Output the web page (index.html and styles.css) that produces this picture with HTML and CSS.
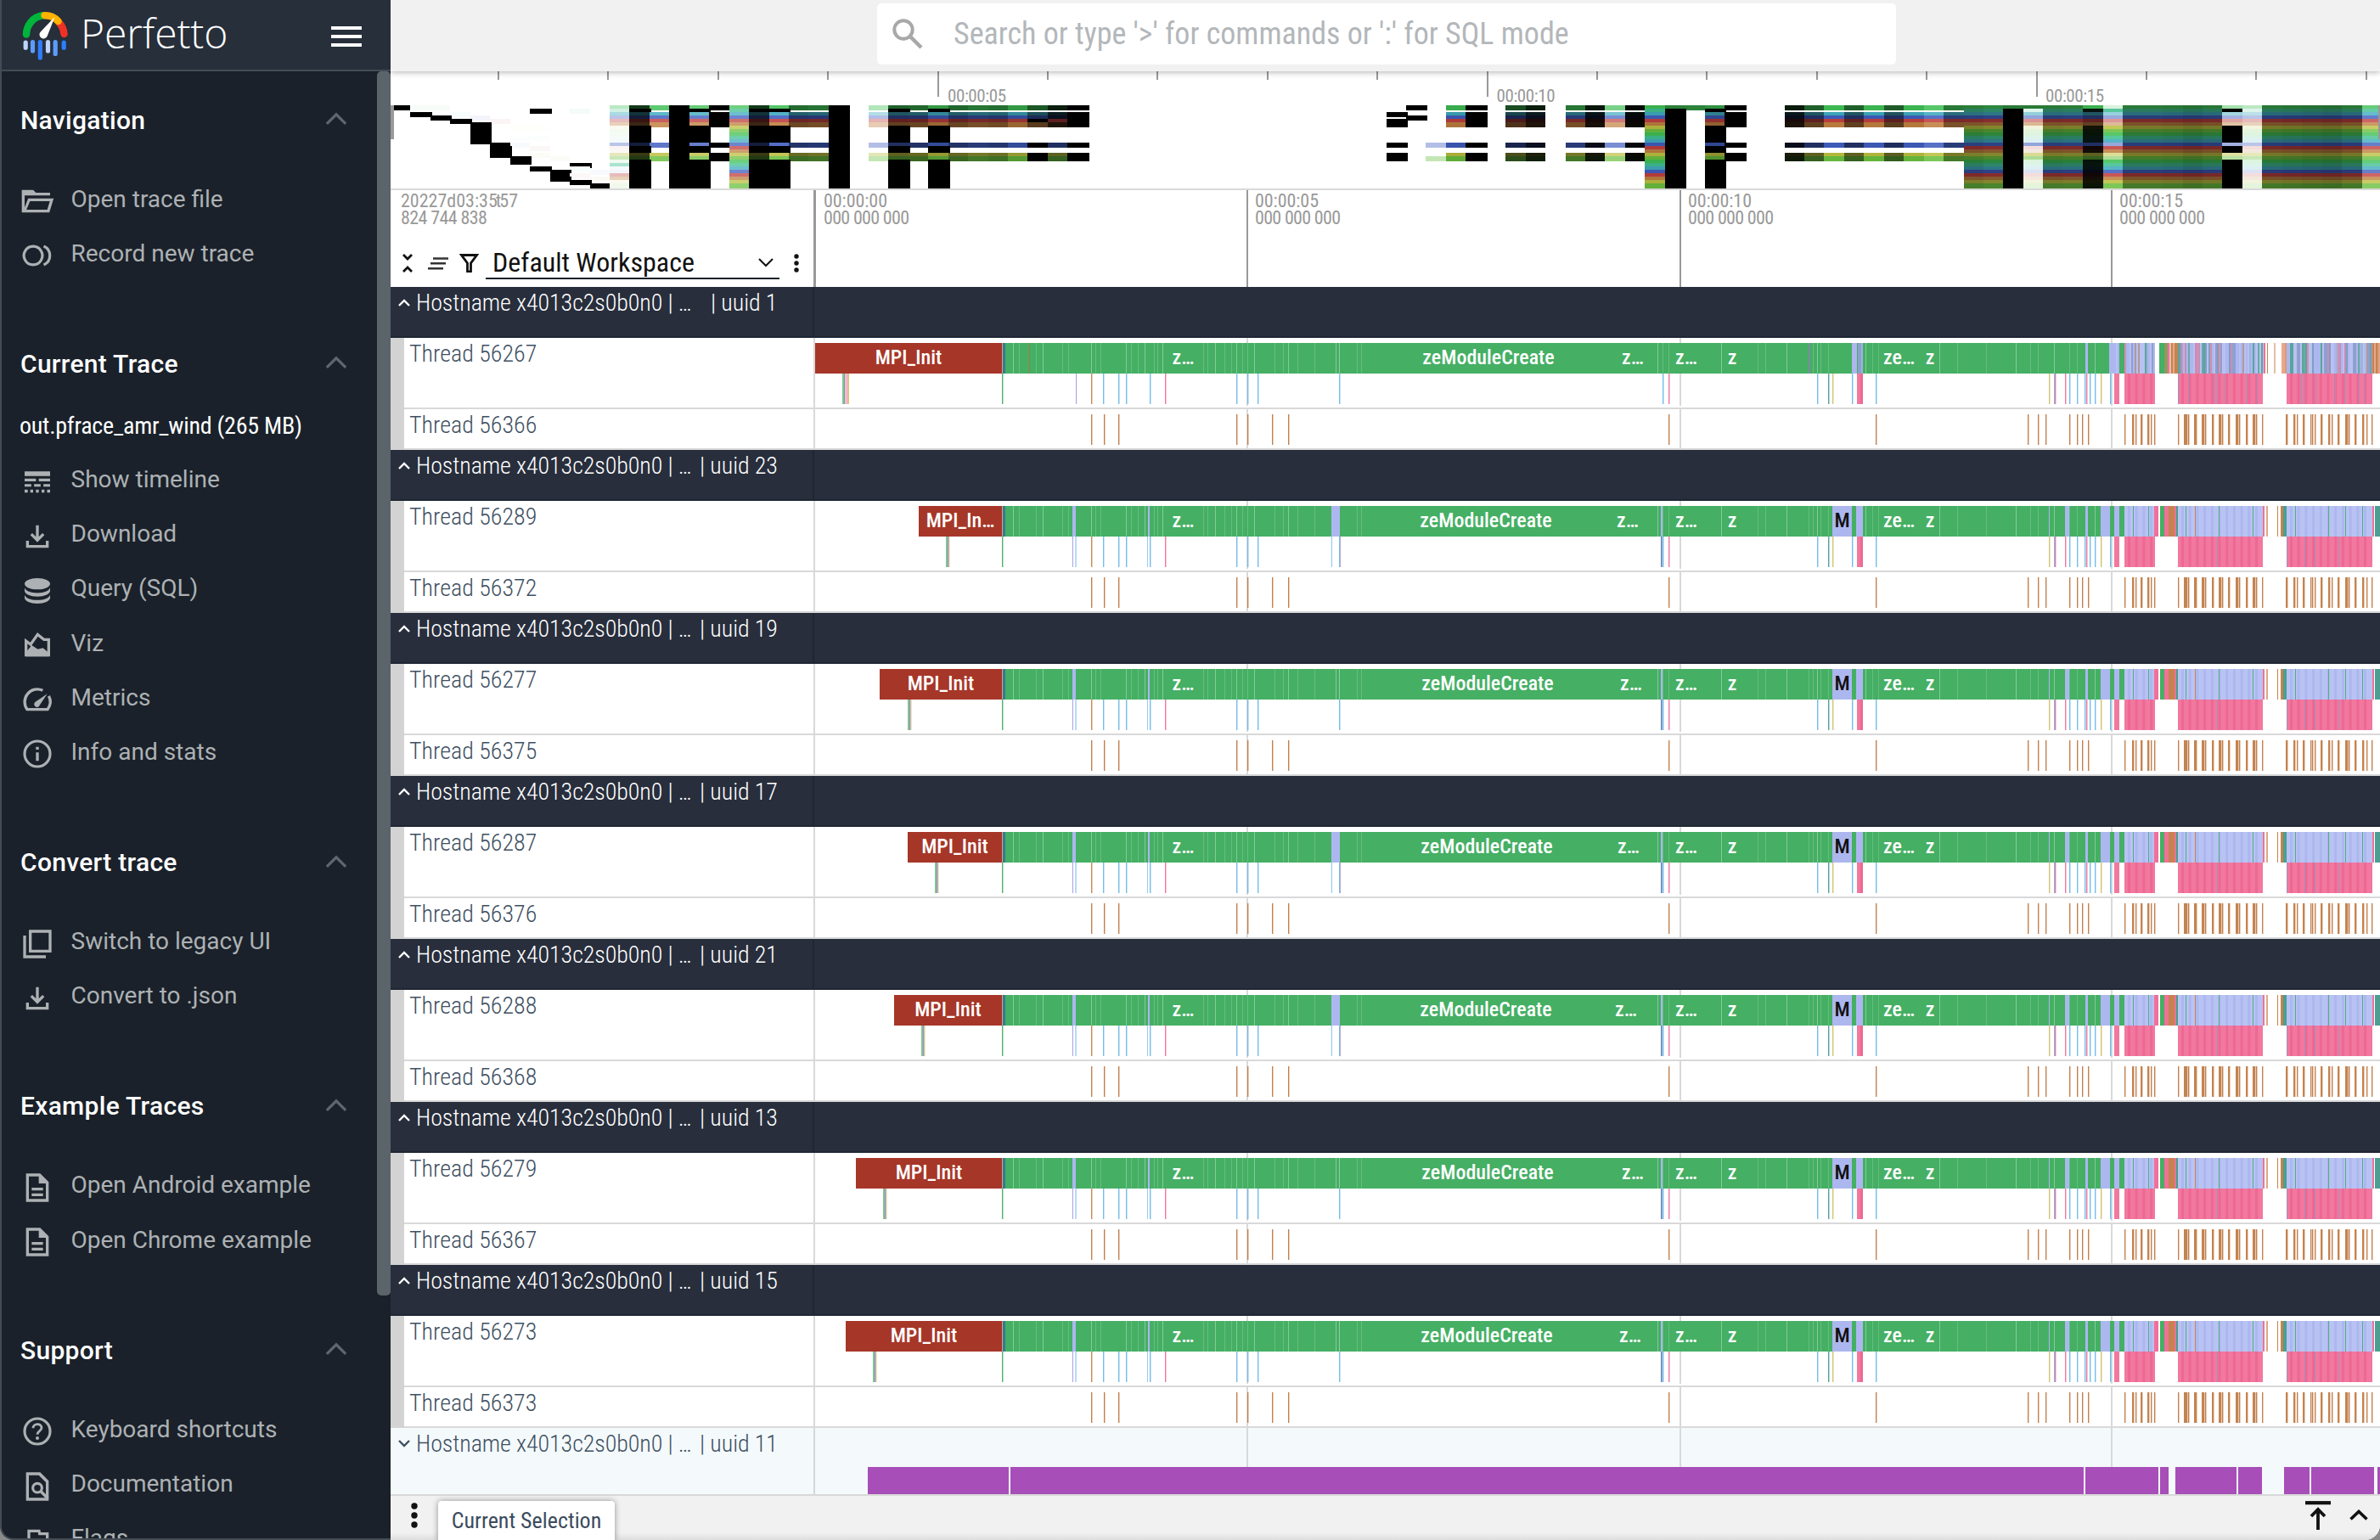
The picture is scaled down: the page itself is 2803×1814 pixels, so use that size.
FILE: index.html
```html
<!DOCTYPE html>
<html lang="en">
<head>
<meta charset="utf-8">
<title>Perfetto UI</title>
<link rel="stylesheet" href="styles.css">
</head>
<body>
<svg class="sprite" aria-hidden="true">
  <symbol id="up" viewBox="0 0 24 16"><path d="M1.500 14 12 3.600 22.500 14" fill="none" stroke="currentColor" stroke-width="3"/></symbol>
  <symbol id="folder" viewBox="0 0 24 24"><path d="M1 20V4h8l2 2h10v2H3v8.500L5.500 10H23.500l-3 10zm3.300-2h14.700l1.800-6H6.800z"/></symbol>
  <symbol id="record" viewBox="0 0 24 24"><path fill="none" stroke="currentColor" stroke-width="1.900" d="M9 5.500a6.500 6.500 0 1 0 .01 0zM16.500 5.400a7.200 7.200 0 0 1 0 13.200"/></symbol>
  <symbol id="timeline" viewBox="0 0 24 24"><path d="M3 5h18v3.200H3zM3 10h8v2H3zM13 10h8v2h-8zM3 14h4.700v1.800H3zM9.700 14h4.600v1.800H9.700zM16.300 14H21v1.800h-4.700zM3 17.800h2.200V20H3zM7 17.800h2V20H7zM11 17.800h2V20h-2zM15 17.800h2V20h-2zM18.900 17.800H21V20h-2.100z"/></symbol>
  <symbol id="download" viewBox="0 0 24 24"><path d="m12 16-5-5 1.400-1.450 2.600 2.600V4h2v8.150l2.600-2.600L17 11zM4 20v-5h2v3h12v-3h2v5z"/></symbol>
  <symbol id="db" viewBox="0 0 24 24"><path d="M12 3c5 0 9 1.800 9 4s-4 4-9 4-9-1.800-9-4 4-4 9-4zM3 9.500c0 2.200 4 4 9 4s9-1.800 9-4V12c0 2.200-4 4-9 4s-9-1.800-9-4zM3 14.500c0 2.200 4 4 9 4s9-1.800 9-4V17c0 2.200-4 4-9 4s-9-1.800-9-4z"/></symbol>
  <symbol id="viz" viewBox="0 0 24 24"><path d="M3 20V7l4 3 5-7 5 4h4v13zm2-4.200L8 12l4.200 2.800L16 14l3 2.500V9h-2.700l-3.900-3.100-5 7L5 11z"/><path d="m4 18 4-5 9 4 3 2v1H4z"/></symbol>
  <symbol id="speed" viewBox="0 0 24 24"><path fill="none" stroke="currentColor" stroke-width="2" d="M15.800 5.500A9 9 0 0 0 4.800 19h14.400a9 9 0 0 0 .9-9.500"/><path d="M10.400 16.800c-1-1-.9-2.300.2-3.100L19 8l-5.700 8.500c-.8 1.100-2 1.200-2.900.3z"/></symbol>
  <symbol id="info" viewBox="0 0 24 24"><circle cx="12" cy="12" r="9" fill="none" stroke="currentColor" stroke-width="1.900"/><path d="M11 11h2v6h-2zM11 7h2v2h-2z"/></symbol>
  <symbol id="copy" viewBox="0 0 24 24"><path d="M6 2h16v16H6zm2 2v12h12V4zM2 6h2v14h14v2H2z"/></symbol>
  <symbol id="doc" viewBox="0 0 24 24"><path d="M4 2h10l6 6v14H4zm2 2v16h12V9h-5V4z"/><path d="M8 12h8v2H8zM8 16h8v2H8z"/></symbol>
  <symbol id="help" viewBox="0 0 24 24"><circle cx="12" cy="12" r="9" fill="none" stroke="currentColor" stroke-width="1.900"/><path d="M9 9.800c0-3.700 6-3.700 6-.3 0 2.300-3 2.300-3 4.700" fill="none" stroke="currentColor" stroke-width="1.700"/><circle cx="12" cy="16.800" r="1.200"/></symbol>
  <symbol id="find" viewBox="0 0 24 24"><path d="M4 2h10l6 6v14H4zm2 2v16h12V9l-5-5z"/><circle cx="12" cy="13" r="3.200" fill="none" stroke="currentColor" stroke-width="1.900"/><path d="m13.600 16 1.500-1.500 5 5.200-1.300 1.600z"/></symbol>
  <symbol id="flag" viewBox="0 0 24 24"><path d="M5 21V4h9l.4 2H20v10h-7l-.4-2H7v7zm8.600-7H18V8h-5.200l-.4-2H7v6h6.200z"/></symbol>
</svg>

<aside class="sidebar">
  <header class="brand">
    <svg class="logo" viewBox="0 0 54 60">
      <g fill="none" stroke-linecap="round" stroke-width="8.500">
        <path d="M5 28.500A22.500 22.500 0 0 1 24 6.300" stroke="#00b53b"/>
        <path d="M43 14a22.500 22.500 0 0 1 6.500 14" stroke="#ee3124"/>
        <path d="M26.500 6.200C33 6 38.500 8.500 42.500 13" stroke="#ffb300"/>
      </g>
      <path d="M38.500 8 29.700 30.500a4.800 4.800 0 1 1-7.500-5.500z" fill="#fff"/>
      <g fill="none" stroke-linecap="round" stroke-width="5.200">
        <path d="M4.200 38.200v6M30.500 37.500v10.500" stroke="#bcd4ff"/>
        <path d="M12.500 37.500V48M39.200 37.500v14" stroke="#5c9bff"/>
        <path d="M21.300 37.500V56M49.200 38.200v6" stroke="#2e7dff"/>
      </g>
    </svg>
    <span class="brand-name">Perfetto</span>
    <span class="burger"><i></i><i></i><i></i></span>
  </header>
  <div class="side-body">
    <nav class="side-nav">
      <section><h2>Navigation<svg><use href="#up"/></svg></h2>
        <a><svg><use href="#folder"/></svg>Open trace file</a>
        <a><svg><use href="#record"/></svg>Record new trace</a>
      </section>
      <section><h2>Current Trace<svg><use href="#up"/></svg></h2>
        <p class="file">out.pfrace_amr_wind (265 MB)</p>
        <a><svg><use href="#timeline"/></svg>Show timeline</a>
        <a><svg><use href="#download"/></svg>Download</a>
        <a><svg><use href="#db"/></svg>Query (SQL)</a>
        <a><svg><use href="#viz"/></svg>Viz</a>
        <a><svg><use href="#speed"/></svg>Metrics</a>
        <a><svg><use href="#info"/></svg>Info and stats</a>
      </section>
      <section><h2>Convert trace<svg><use href="#up"/></svg></h2>
        <a><svg><use href="#copy"/></svg>Switch to legacy UI</a>
        <a><svg><use href="#download"/></svg>Convert to .json</a>
      </section>
      <section><h2>Example Traces<svg><use href="#up"/></svg></h2>
        <a><svg><use href="#doc"/></svg>Open Android example</a>
        <a><svg><use href="#doc"/></svg>Open Chrome example</a>
      </section>
      <section><h2>Support<svg><use href="#up"/></svg></h2>
        <a><svg><use href="#help"/></svg>Keyboard shortcuts</a>
        <a><svg><use href="#find"/></svg>Documentation</a>
        <a><svg><use href="#flag"/></svg>Flags</a>
      </section>
    </nav>
    <div class="scrollbar"></div>
  </div>
</aside>

<main class="main">
  <div class="topbar">
    <div class="omnibox">
      <svg viewBox="0 0 36 36"><circle cx="13" cy="13" r="10.700" fill="none" stroke="#a8a8a8" stroke-width="4"/><path d="m21 21 13 13" stroke="#a8a8a8" stroke-width="4.500"/></svg>
      <span>Search or type '&gt;' for commands or ':' for SQL mode</span>
    </div>
  </div>
  <svg class="overview" id="overview" viewBox="460 84 2343 138"></svg>
  <div class="axis">
    <div class="axis-left">
      <div class="stamp"><span class="date">20227d03:35<i>t</i>57</span><span>824 744 838</span></div>
      <div class="tools">
        <svg class="t-collapse" viewBox="0 0 12 22"><path d="m1 1 5 5 5-5M1 21l5-5 5 5" fill="none" stroke="#111" stroke-width="2.800"/></svg>
        <svg class="t-sort" viewBox="0 0 24 15"><path d="M6 1.500h18M3 7.300h18M0 13.200h18" stroke="#333" stroke-width="2.600"/></svg>
        <svg class="t-filter" viewBox="0 0 23 22"><path d="M2.500 1.500h18l-7 9.500V21h-4V11z" fill="none" stroke="#111" stroke-width="2.800"/></svg>
        <span class="workspace">Default Workspace<svg viewBox="0 0 18 11"><path d="m1 1 8 8 8-8" fill="none" stroke="#111" stroke-width="2"/></svg></span>
        <svg class="t-more" viewBox="0 0 6 22"><g fill="#111"><circle cx="3" cy="3" r="2.700"/><circle cx="3" cy="11" r="2.700"/><circle cx="3" cy="19" r="2.700"/></g></svg>
      </div>
    </div>
    <svg class="axis-ruler" id="ruler" viewBox="958 224 1845 114"></svg>
  </div>
  <div class="groups" id="groups"></div>
  <footer class="drawer">
    <svg class="d-more" viewBox="0 0 8 30"><g fill="#111"><circle cx="4" cy="4" r="3.700"/><circle cx="4" cy="15" r="3.700"/><circle cx="4" cy="26" r="3.700"/></g></svg>
    <div class="tab">Current Selection</div>
    <svg class="d-top" viewBox="0 0 30 34"><path d="M0 2.200h30" stroke="#111" stroke-width="4.200"/><path d="M15 34V11M7 18l8-8 8 8" fill="none" stroke="#111" stroke-width="3.800"/></svg>
    <svg class="d-up" viewBox="0 0 22 13"><path d="m1.500 11.500 9.500-9 9.500 9" fill="none" stroke="#111" stroke-width="3.600"/></svg>
  </footer>
</main>
<script src="timeline.js"></script>
</body>
</html>
```
FILE: styles.css
```css
* { box-sizing: border-box; }
body { margin: 0; width: 2803px; height: 1814px; overflow: hidden; display: flex; background: #8b8b8b; font-family: Roboto, "Liberation Sans", sans-serif; }
svg { display: block; flex: none; }
.sprite { position: absolute; width: 0; height: 0; }

.sidebar { width: 460px; height: 1814px; flex: none; display: flex; flex-direction: column; overflow: hidden; background: #1a212a; border-left: 2px solid #434b53; border-bottom: 2px solid #434b53; border-bottom-left-radius: 16px; }
.brand { height: 84px; flex: none; display: flex; align-items: center; background: #262f3a; border-bottom: 2px solid #434b53; padding: 0 34px 0 24px; }
.logo { width: 54px; height: 60px; margin-top: 1px; }
.brand-name { margin-left: 15px; font: 300 48px/60px "Open Sans", sans-serif; color: #fff; letter-spacing: -.1px; margin-top: -4px; }
.burger { margin-left: auto; width: 36px; display: flex; flex-direction: column; gap: 6px; margin-top: 3px; }
.burger i { height: 4px; background: #fff; }
.side-body { flex: 1; min-height: 0; display: flex; }
.side-nav { width: 442px; overflow: hidden; margin-top: -4px; }
.side-nav section { margin-bottom: 37px; }
.side-nav h2 { margin: 0; height: 122px; padding: 0 35px 0 22px; display: flex; align-items: center; justify-content: space-between; font-size: 30px; font-weight: 500; letter-spacing: .3px; color: #fff; }
.side-nav h2 svg { width: 26px; height: 17px; color: #5f676e; margin-top: -3px; }
.side-nav a { height: 64.200px; display: flex; align-items: center; padding-left: 22px; font-size: 28px; color: #adb1b4; }
.side-nav a svg { width: 40px; height: 40px; margin: 6px 19.500px 0 0; fill: currentColor; }
.side-nav .file { margin: -19px 0 0; height: 62px; line-height: 63px; padding-left: 21px; font-size: 28px; font-stretch: 75%; letter-spacing: -.25px; color: #fff; }
.scrollbar { width: 16px; height: 1442px; border-radius: 5px; background: #5b636b; }

.main { width: 2343px; height: 1814px; display: flex; flex-direction: column; background: #fff; border-bottom-right-radius: 18px; overflow: hidden; font-stretch: 75%; }
.topbar { height: 84px; flex: none; background: #f1f1f1; display: flex; padding: 4px 0 0 573px; box-shadow: 0 1px 7px rgba(0,0,0,.32); z-index: 1; }
.omnibox { width: 1200px; height: 72px; border-radius: 5px; background: #fff; display: flex; align-items: center; padding-left: 18px; font-size: 36px; color: #b3b7ba; }
.omnibox svg { width: 36px; height: 36px; margin-right: 36px; }
.omnibox span { margin-top: -1px; }
.overview { width: 2343px; height: 138px; }
.tick-text { font-family: Roboto, sans-serif; font-stretch: 75%; fill: #999; }

.axis { height: 116px; flex: none; display: flex; border-top: 2px solid #d9d9d9; }
.axis-left { width: 498px; display: flex; flex-direction: column; }
.stamp { height: 60px; padding: 3px 0 0 12px; display: flex; flex-direction: column; font-size: 22px; line-height: 20px; letter-spacing: -.6px; color: #999; }
.stamp .date { letter-spacing: 0; }
.stamp i { font-style: normal; margin: 0 -2px 0 -2px; }
.tools { display: flex; align-items: center; padding-left: 14px; height: 50px; margin-top: 1px; }
.t-collapse { width: 12px; height: 22px; margin-right: 18px; }
.t-sort { width: 24px; height: 15px; margin-right: 13px; }
.t-filter { width: 23px; height: 22px; margin-right: 8px; }
.t-more { width: 6px; height: 22px; margin-left: 17px; }
.workspace { width: 346px; height: 44px; display: flex; align-items: center; justify-content: space-between; padding: 6px 7px 0 8px; border-bottom: 2px solid #1a212a; margin-top: -6px; font-size: 32px; color: #111; }
.workspace svg { width: 18px; height: 11px; }
.axis-ruler { width: 1845px; height: 114px; }

.groups { height: 1424px; flex: none; }
.group-head { height: 60px; display: flex; background: #282e3c; color: #fff; border-bottom: 2px solid #1f2733; font-size: 28px; font-weight: 300; }
.group-title { width: 499px; height: 58px; padding-left: 9px; border-right: 2px solid #1f2733; display: flex; line-height: 37px; letter-spacing: -.08px; }
.group-title svg { width: 14px; height: 9px; margin: 14px 7px 0 0; }
.group-title b { font-weight: inherit; width: 334px; white-space: pre; }
.group-title .wide { width: 347px; }
.group-body { border-left: 16px solid #d3d3d3; }
.track { display: flex; border-bottom: 2px solid #d9d9d9; }
.track-name { width: 484px; padding-left: 6px; border-right: 2px solid #d9d9d9; font-size: 28px; line-height: 38px; font-weight: 300; color: #3e5062; }
.slice-text { font-family: Roboto, sans-serif; font-stretch: 75%; font-size: 24px; font-weight: 500; text-anchor: middle; fill: #fff; }
.group-closed { height: 80px; display: flex; background: #f4f9fc; border-bottom: 2px solid #d9d9d9; color: #3e5062; font-size: 28px; font-weight: 300; }
.group-closed .group-title { width: 500px; height: 78px; border-color: #d3d8db; }

.drawer { flex: 1; display: flex; background: linear-gradient(#f1f1f1 80%, #dadada); padding-left: 24px; }
.d-more { width: 8px; height: 30px; margin-top: 8px; }
.tab { width: 208px; height: 48px; margin: 6px auto 0 24px; background: #fff; border-radius: 4px 4px 0 0; box-shadow: 0 0 7px rgba(0,0,0,.4); font-size: 26px; line-height: 47px; text-align: center; color: #3c4b5d; }
.d-top { width: 30px; height: 34px; margin: 6px 22px 0 0; }
.d-up { width: 22px; height: 13px; margin: 16px 14px 0 0; }
```
FILE: timeline.js
```js
const $ = id => document.getElementById(id);
const rect = (x, y, w, h, fill, op) =>
  `<rect x="${x}" y="${y}" width="${w}" height="${h}" fill="${fill}"${op ? ` opacity="${op}"` : ''}/>`;

/* ---------- overview minimap: 24 cpu rows by 100 load columns ---------- */
const HUES = [130, 158, 190, 226, 0, 30, 62, 100];
const ACTIVE = [0, 2, 3, 4, 5, 11, 14, 15];
// [column, lightness of active rows, lightness of the other rows (null = idle)]
const COLS = [
  [12, 15, 0], [13, 58, null], [14, 0, 0], [15, 60, 0], [16, 0, null], [17, 62, 62], [18, 15, 0], [19, 55, 0],
  [20, 28, null], [21, 30, null], [22, 0, 0], [24, 80, null], [25, 25, 0], [26, 27, null], [27, 40, 0],
  [28, 27, null], [29, 31, null], [30, 29, null], [31, 40, null], [32, 23, null], [33, 8, null], [34, 0, null],
  [53, 45, null], [54, 0, null], [56, 20, null], [57, 8, null], [59, 31, null], [60, 6, null], [61, 65, null],
  [62, 3, null], [63, 46, 46], [64, 0, 0], [66, 38, 0], [67, 0, null],
  [70, 7, null], [71, 25, null], [72, 48, null], [73, 25, null], [74, 47, null], [75, 24, null], [76, 47, null],
  [77, 56, null], [78, 32, null], [79, 33, 33], [80, 35, 35], [81, 0, 0], [82, 72, 91], [83, 32, 32], [84, 33, 33],
  [85, 25, 5], [86, 73, 56], [87, 32, 32], [88, 32, 32], [89, 31, 31], [90, 29, 29], [91, 31, 31], [92, 76, 0],
  [93, 82, 91], [94, 31, 31], [95, 30, 30], [96, 29, 29], [97, 28, 28], [98, 31, 31], [99, 60, 60]
];
const PATCH = [
  [0, 0, 0], [1, 2, 0], [2, 3, 0], [3, 4, 0], [7, 1, 0], [7, 18, 0], [9, 22, 0], [9, 17, 0], [10, 23, 0],
  [1, 0, 98], [2, 0, 98], [3, 2, 98], [4, 3, 97], [5, 4, 97], [6, 6, 99], [7, 6, 99], [6, 9, 99], [7, 9, 99],
  [6, 11, 98], [7, 12, 98], [7, 14, 98], [8, 15, 98], [9, 1, 97], [9, 18, 98], [10, 19, 98], [9, 20, 98], [10, 21, 98],
  [50, 2, 0], [50, 4, 0], [50, 5, 0], [50, 11, 0], [50, 14, 0], [50, 15, 0], [51, 0, 0], [51, 3, 0],
  [52, 11, 80], [52, 15, 80], [64, 0, 33], [65, 0, 34], [81, 0, 32], [82, 0, 32], [85, 0, 46], [86, 0, 90],
  [32, 4, 0], [32, 11, 0], [32, 14, 0], [32, 15, 0], [33, 4, 24], [33, 11, 25], [33, 14, 25], [33, 15, 25],
  [11, 0, 82], [11, 1, 88], [11, 2, 78], [11, 3, 82], [11, 4, 82], [11, 5, 82], [11, 6, 96], [11, 7, 96], [11, 8, 97],
  [11, 9, 97], [11, 10, 97], [11, 11, 82], [11, 12, 97], [11, 13, 97], [11, 14, 82], [11, 15, 82], [11, 16, 96],
  [11, 17, 78], [11, 18, 97], [11, 19, 97], [11, 20, 82], [11, 21, 82], [11, 22, 96], [11, 23, 95]
];
[[4, 5, 10], [5, 11, 14], [6, 15, 16], [8, 19, 21]].forEach(([c, a, b]) => {
  for (let r = a; r <= b; r++) PATCH.push([c, r, 0]);
});

function drawOverview() {
  const cells = new Map();
  const put = (c, r, l) => cells.set(r * 100 + c, l);
  COLS.forEach(([c, act, rest]) => {
    for (let r = 0; r < 24; r++) {
      const l = ACTIVE.includes(r) ? act : rest;
      if (l !== null) put(c, r, l);
    }
  });
  PATCH.forEach(p => put(...p));
  let out = '';
  [...cells.keys()].sort((a, b) => a - b).forEach(k => {
    const c = k % 100, r = (k - c) / 100;
    const x0 = Math.round(460 + 23.450 * c), x1 = Math.round(460 + 23.450 * (c + 1));
    out += rect(x0, 124 + 4 * r, x1 - x0 + (cells.get(k) === 0 ? 2 : 0), 6, `hsl(${HUES[r % 8]} 50% ${cells.get(k)}%)`);
  });
  for (let i = 0; i < 18; i++) {
    const major = i % 5 === 4;
    out += rect(Math.round(586 + 129.400 * i), 84, 2, major ? 30 : 10, '#999');
  }
  ['05', '10', '15'].forEach((s, i) => {
    out += `<text class="tick-text" font-size="21" x="${1116 + 646.500 * i}" y="120" textLength="69">00:00:${s}</text>`;
  });
  out += rect(460, 124, 4, 40, '#999') + rect(2801, 124, 4, 40, '#999');
  $('overview').innerHTML = out;
}

const GRID = [1468, 1978, 2486];

function drawRuler() {
  let out = rect(958, 224, 3, 114, '#999');
  GRID.forEach(x => { out += rect(x, 224, 2, 114, '#999'); });
  [970, 1478, 1988, 2496].forEach((x, i) => {
    out += `<text class="tick-text" font-size="22" x="${x}" y="244" textLength="75">00:00:${['00', '05', '10', '15'][i]}</text>` +
      `<text class="tick-text" font-size="22" x="${x}" y="264" textLength="101">000 000 000</text>`;
  });
  $('ruler').innerHTML = out;
}

/* ---------- tracks ---------- */
const C = { red: '#a63628', green: '#45af64', lav: '#adb7ef', pink: '#f0709a', brown: '#c5834f', sky: '#6db9e8', teal: '#4a9f92', olive: '#d0c06c', blue: '#327d8f' };

const GROUPS = [
  { uuid: '1', main: 56267, sub: 56366, start: 960, call: 992, zm: 1753, z3: 1923, busy: true },
  { uuid: '23', main: 56289, sub: 56372, start: 1082, call: 1114, zm: 1750, z3: 1917, gap: true },
  { uuid: '19', main: 56277, sub: 56375, start: 1036, call: 1069, zm: 1752, z3: 1921 },
  { uuid: '17', main: 56287, sub: 56376, start: 1069, call: 1101, zm: 1751, z3: 1918, gap: true },
  { uuid: '21', main: 56288, sub: 56368, start: 1053, call: 1085, zm: 1750, z3: 1915, gap: true },
  { uuid: '13', main: 56279, sub: 56367, start: 1008, call: 1040, zm: 1752, z3: 1923 },
  { uuid: '15', main: 56273, sub: 56373, start: 996, call: 1028, zm: 1751, z3: 1920 }
];

const SEAMS = [1193, 1200, 1220, 1228, 1251, 1258, 1285, 1290, 1296, 1326, 1332, 1340, 1348, 1359, 1363, 1369, 1417, 1422, 1431, 1442, 1450,
  1456, 1463, 1469, 1477, 1501, 1511, 1517, 1528, 1548, 1573, 1598, 1603, 1952, 1958, 1965, 2027, 2070, 2079, 2104, 2130, 2135, 2140, 2144, 2153, 2197, 2205,
  2212, 2284, 2305, 2339, 2374, 2391, 2400, 2419, 2437, 2446, 2467];
const CALLS = [[1180, 'green'], [1285, 'brown'], [1299, 'sky'], [1317, 'sky'], [1326, 'sky'], [1354, 'sky'], [1372, 'pink'], [1456, 'sky'],
  [1469, 'sky'], [1481, 'sky'], [1577, 'sky'], [1958, 'sky'], [1965, 'pink'], [2140, 'sky'], [2153, 'teal'], [2158, 'olive'],
  [2181, 'sky'], [2209, 'sky'], [2413, 'olive'], [2419, 'sky'], [2420, 'pink'], [2432, 'pink'], [2437, 'sky'], [2446, 'sky'],
  [2455, 'sky'], [2457, 'pink'], [2461, 'sky'], [2467, 'sky'], [2474, 'olive'], [2485, 'sky']];
const KERNELS = [[1285, 1], [1300, 1], [1317, 1], [1456, 1], [1469, 1], [1498, 1], [1517, 1], [1965, 1], [2209, 1], [2388, 1], [2400, 1], [2409, 1],
  [2437, 1], [2446, 1], [2452, 1], [2459, 1], [2502, 1], [2511, 2], [2515, 1], [2521, 2], [2529, 2], [2533, 1], [2537, 1], [2565, 1], [2572, 4],
  [2577, 1], [2584, 3], [2593, 3], [2597, 1], [2605, 2], [2613, 3], [2617, 1], [2624, 2], [2633, 3], [2637, 1], [2645, 2], [2653, 3], [2657, 1],
  [2664, 1], [2692, 2], [2701, 2], [2705, 1], [2712, 2], [2721, 1], [2723, 1], [2726, 1], [2733, 2], [2742, 2], [2746, 1], [2753, 2], [2762, 3],
  [2766, 1], [2773, 2], [2782, 2], [2787, 1], [2793, 1]];

const grid = h => GRID.map(x => rect(x, 0, 2, h, '#d9d9d9')).join('');

function striped(x0, x1, y, base, alt) {
  let out = rect(x0, y, x1 - x0, 36, base);
  for (let x = x0 + 4; x < x1 - 2; x += 8.700) out += rect(x.toFixed(1), y, 3, 36, alt);
  return out;
}

function noisy(x0, x1, seed, palette) {
  let out = '', s = seed;
  for (let x = x0; x < x1; x += 2) {
    s = (s * 1103515245 + 12345) % 2147483648;
    out += rect(x, 6, Math.min(2, x1 - x), 36, palette[Math.floor(s / 65536) % palette.length]);
  }
  return out;
}

const MIX = ['#adb7ef', '#b9c1f2', '#adb7ef', '#9fb3df', '#b9c1f2', '#5aa59b', '#8f9fd0', '#adb7ef', '#c58fb8', '#6aa8a8', '#d58fb0', '#b9c1f2', '#7f9ec0', '#b09a9a'];
const WARM = ['#c5834f', '#d99a7a', '#e7a78a', '#c5834f', '#8c9a62', '#f0709a', '#e6c3a9'];

function mainTrack(g) {
  const at = (x, w, color) => rect(x, 6, w, 36, color);
  let o = grid(80);
  o += at(g.start, 1180 - g.start, C.red) + at(1180, 1, '#d99') + at(1181, 3, C.blue) + at(1184, 1318, C.green);
  SEAMS.forEach((x, i) => { o += rect(x, 6, 1, 36, '#8fd0a2', i % 3 ? .45 : .85); });
  if (g.busy) {
    o += at(1212, 1, '#a9793f') + at(2130, 1.500, '#8f7fb5') + at(2181, 6, C.lav) + noisy(2188, 2194, 7, MIX) + at(2456, 3, C.lav) +
      at(2484, 6, C.lav) + noisy(2490, 2496, 5, MIX) + noisy(2502, 2538, 21, MIX) + at(2543, 7, C.green) +
      noisy(2549, 2565, 9, WARM) + noisy(2565, 2666, 77, MIX) + at(2666, 2, C.pink) + at(2670, 1, C.brown) +
      at(2678, 2, '#e2c0a6') + noisy(2687, 2693, 3, WARM) + noisy(2693, 2794, 1234, MIX) + noisy(2794, 2803, 11, WARM);
  } else {
    o += at(1263, 4, C.lav) + at(1352, 2, C.lav) + at(1956, 2, C.lav) + at(2158, 23, C.lav) + at(2186, 8, C.lav) + at(2413, 1, C.lav) +
      at(2432, 5, C.lav) + at(2456, 3, C.lav) + at(2474, 11, C.lav) + at(2490, 6, C.lav) +
      striped(2502, 2537, 6, '#b9c3f3', C.lav) + at(2537, 5, C.pink) + at(2544, 5, C.green) + at(2549, 5, C.pink) +
      at(2554, 7, C.brown) + at(2561, 2, C.pink) + at(2563, 3, C.teal) + striped(2565, 2665, 6, '#b9c3f3', C.lav) + at(2665, 2, C.pink) +
      at(2669, 2, '#d9a985') + at(2682, 1, C.brown) + at(2686, 3, C.brown) + at(2689, 4, C.teal) +
      striped(2693, 2794, 6, '#b9c3f3', C.lav) + at(2794, 2, C.pink) + noisy(2797, 2803, 15, ['#c5834f', '#a63628', '#4a9f92']);
    [2512, 2530, 2574, 2613, 2653, 2703, 2742, 2762, 2782].forEach(x => { o += at(x, 1, '#4fae84'); });
    o += at(2585, 1, C.brown);
  }
  if (g.gap) o += at(1568, 10, C.lav);
  else o += at(1577, 1, '#8fd0a2');

  const below = (x, w, color, op) => rect(x, 42, w, 36, color, op);
  o += below(g.call, 2, C.green, .7) + below(g.call + 2, 1.500, '#8b6bb0', .8) + below(g.call + 3.500, 1, C.olive, .8);
  if (g.busy) o += below(997, 1.500, C.pink, .8) + below(999, 1, C.olive);
  if (!g.busy) o += below(1263, 1, '#a9a0e0') + below(1266.500, 1, C.sky) + below(1351, 1, C.sky, .7) + below(1956, 1.500, '#5b78b5');
  else o += below(1267, 1, '#a99be0');
  if (g.gap) o += below(1568, 1, C.sky, .8) + below(1578, 1, C.pink, .7);
  CALLS.forEach(([x, color]) => { o += below(x, 1.400, C[color], .95); });
  [[2187, 2194], [2490, 2496], [2502, 2538], [2565, 2665], [2693, 2794]].forEach(([a, b]) => { o += striped(a, b, 42, '#f1789f', '#ee6893'); });
  const veins = g.busy ? [2565, 2577, 2607, 2611, 2619, 2646, 2658, 2710, 2713, 2727, 2750, 2761, 2778, 2784] : [2611, 2693, 2714, 2726, 2754];
  veins.forEach(x => { o += below(x, 1, '#a58fb8'); });

  const label = (x, text, fill) => `<text class="slice-text" x="${x}" y="31"${fill ? ` style="fill:${fill}"` : ''}>${text}</text>`;
  const wide = 1180 - g.start > 105;
  o += label((g.start + 1180) / 2, wide ? 'MPI_Init' : 'MPI_In…') + label(1393.500, 'z…') + label(g.zm, 'zeModuleCreate') +
    label(g.z3, 'z…') + label(1986, 'z…') + label(2040, 'z') + label(2236.500, 'ze…') + label(2273, 'z');
  if (!g.busy) o += label(2169.500, 'M', '#111');
  return o;
}

function subTrack() {
  return grid(48) + KERNELS.map(([x, w]) => rect(x, 6, w, 36, w > 1 ? '#c5834f' : '#c08050') + rect(x + w, 6, 1, 36, '#e8cdb8')).join('');
}

const title = (uuid, dir) => `<div class="group-title"><svg viewBox="0 0 14 9"><path d="${dir === 'up' ? 'M1 8l6-6 6 6' : 'M1 1l6 6 6-6'}" fill="none" stroke="currentColor" stroke-width="2.400"/></svg>` +
  `<b${uuid === '1' ? ' class="wide"' : ''}>Hostname x4013c2s0b0n0 | …</b><span>| uuid ${uuid}</span></div>`;

const track = (name, h, body) => `<div class="track"><div class="track-name">${name}</div>` +
  `<svg width="1843" height="${h}" viewBox="960 0 1843 ${h}">${body}</svg></div>`;

function drawGroups() {
  const open = GROUPS.map(g => `<section><div class="group-head">${title(g.uuid, 'up')}</div><div class="group-body">` +
    track(`Thread ${g.main}`, 82, mainTrack(g)) + track(`Thread ${g.sub}`, 46, subTrack()) + '</div></section>').join('');
  const summary = [[1022, 1188], [1190, 2454], [2456, 2542], [2544, 2554], [2562, 2634], [2636, 2664], [2690, 2720], [2722, 2796], [2800, 2803]]
    .map(([a, b]) => rect(a, 46, b - a, 32, '#a74eb8')).join('');
  $('groups').innerHTML = open + `<section class="group-closed">${title('11', 'down')}` +
    `<svg width="1843" height="78" viewBox="960 0 1843 78">${grid(78)}${rect(1022, 46, 1532, 32, '#fff')}${summary}</svg></section>`;
}

drawOverview();
drawRuler();
drawGroups();
```
